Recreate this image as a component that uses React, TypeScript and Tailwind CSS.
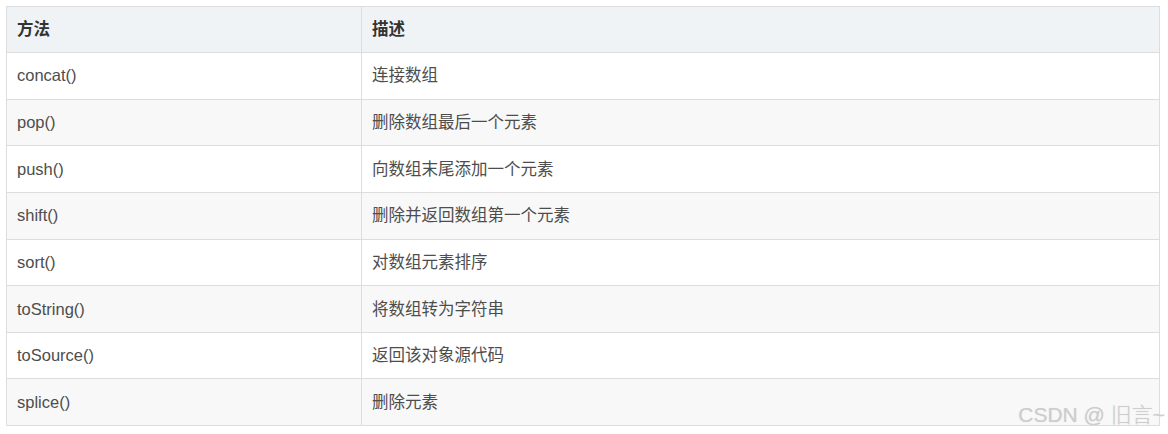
const rows: [string, string][] = [
  ['concat()', '连接数组'],
  ['pop()', '删除数组最后一个元素'],
  ['push()', '向数组末尾添加一个元素'],
  ['shift()', '删除并返回数组第一个元素'],
  ['sort()', '对数组元素排序'],
  ['toString()', '将数组转为字符串'],
  ['toSource()', '返回该对象源代码'],
  ['splice()', '删除元素'],
];

const font = { fontFamily: '"Liberation Sans", Arial, "Noto Sans CJK SC", sans-serif' };

export default function App() {
  return (
    <div className="relative w-[1168px] h-[434px] bg-white overflow-hidden" style={font}>
      <div className="pt-[6px] pl-[6px]">
        <table className="border-collapse w-[1154px] text-[16.5px] text-[#4d4d4d]">
          <thead>
            <tr className="h-[46px] bg-[#eff3f5]">
              <th className="w-[355px] border border-[#dddddd] px-[10px] text-left font-bold text-[#333333]">方法</th>
              <th className="border border-[#dddddd] px-[10px] text-left font-bold text-[#333333]">描述</th>
            </tr>
          </thead>
          <tbody>
            {rows.map(([m, d], i) => (
              <tr key={m} className={`h-[46.63px] ${i % 2 === 1 ? 'bg-[#f8f8f8]' : 'bg-white'}`}>
                <td className="border border-[#dddddd] px-[10px]">{m}</td>
                <td className="border border-[#dddddd] px-[10px]">{d}</td>
              </tr>
            ))}
          </tbody>
        </table>
      </div>
      <div className="absolute right-[3px] top-[399px] text-[21px] font-light text-[#cdcdcd] [text-shadow:0_0_1px_#dadada]">
        CSDN @ 旧言~
      </div>
    </div>
  );
}
